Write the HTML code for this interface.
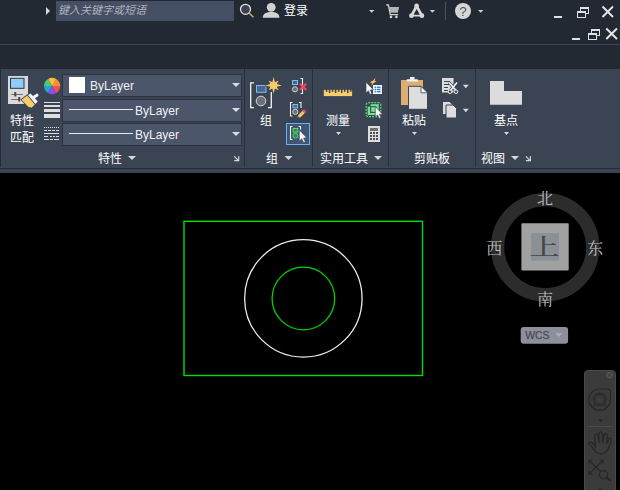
<!DOCTYPE html>
<html lang="zh-CN">
<head>
<meta charset="utf-8">
<title>AutoCAD</title>
<style>
html,body{margin:0;padding:0;}
body{width:620px;height:490px;overflow:hidden;background:#000;position:relative;
 font-family:"Liberation Sans","Noto Sans CJK SC",sans-serif;font-size:12px;color:#fff;}
.abs{position:absolute;}
#title{left:0;top:0;width:620px;height:69px;background:#222933;}
#tline{left:0;top:44px;width:620px;height:1px;background:#3a4556;}
#ribbon{left:0;top:69px;width:620px;height:104px;background:#3b4453;}
#rline{left:0;top:168px;width:620px;height:1px;background:#252b36;}
#ledge{left:0;top:69px;width:1px;height:98px;background:#252b36;}
.sep{position:absolute;top:69px;width:1px;height:98px;background:#272d39;}
.t{position:absolute;white-space:nowrap;line-height:14px;height:14px;}
.c{text-align:center;}
#search{left:56px;top:1px;width:178px;height:20px;background:#454f63;}
#search span{position:absolute;left:2px;top:2px;font-size:11px;line-height:14px;font-style:italic;color:#aeb3bd;white-space:nowrap;}
.dd{position:absolute;left:62px;width:178px;height:21px;background:#4b566a;border:1px solid #2c3340;box-sizing:content-box;}
.dd .tx{position:absolute;top:4px;font-size:12px;line-height:15px;color:#f2f2f2;}
.dd .ln{position:absolute;left:6px;top:9px;width:64px;height:1px;background:#e8e8e8;}
.dd .ar{position:absolute;right:1px;top:8px;width:0;height:0;border-left:4px solid transparent;border-right:4px solid transparent;border-top:4px solid #dcdcdc;}
.compass{position:absolute;font-family:"Liberation Serif","Noto Serif CJK SC",serif;font-size:16px;line-height:16px;width:16px;height:16px;color:#c4c4c4;text-align:center;}
</style>
</head>
<body>
<div class="abs" id="title"></div>
<div class="abs" id="tline"></div>
<div class="abs" id="ribbon"></div>
<div class="abs" id="rline"></div>
<div class="abs" id="ledge"></div>
<div class="sep" style="left:244px"></div>
<div class="sep" style="left:312px"></div>
<div class="sep" style="left:388px"></div>
<div class="sep" style="left:475px"></div>

<div class="abs" id="search"><span>键入关键字或短语</span></div>
<div class="t" style="left:284px;top:4px;">登录</div>

<!-- properties dropdowns -->
<div class="dd" style="top:74px"><div class="abs" style="left:6px;top:2px;width:16px;height:16px;background:#fff;"></div><span class="tx" style="left:27px">ByLayer</span><div class="ar"></div></div>
<div class="dd" style="top:99px"><div class="ln"></div><span class="tx" style="left:72px">ByLayer</span><div class="ar"></div></div>
<div class="dd" style="top:123px"><div class="ln"></div><span class="tx" style="left:72px">ByLayer</span><div class="ar"></div></div>

<!-- big button labels -->
<div class="t c" style="left:4px;width:36px;top:114px;">特性</div>
<div class="t c" style="left:4px;width:36px;top:131px;">匹配</div>
<div class="t c" style="left:254px;width:24px;top:114px;">组</div>
<div class="t c" style="left:320px;width:36px;top:114px;">测量</div>
<div class="t c" style="left:396px;width:36px;top:114px;">粘贴</div>
<div class="t c" style="left:488px;width:36px;top:114px;">基点</div>

<!-- panel titles -->
<div class="t" style="left:98px;top:152px;">特性</div>
<div class="t" style="left:266px;top:152px;">组</div>
<div class="t" style="left:320px;top:152px;">实用工具</div>
<div class="t" style="left:414px;top:152px;">剪贴板</div>
<div class="t" style="left:481px;top:152px;">视图</div>


<svg class="abs" style="left:0;top:0" width="620" height="490" viewBox="0 0 620 490">
<!-- title bar icons -->
<g id="titleicons">
<polygon points="46,7 50,11 46,15" fill="#d8d8d8"/>
<circle cx="245.5" cy="9.3" r="5" fill="#3a4150" stroke="#e0e0e0" stroke-width="1.3"/>
<line x1="249.3" y1="13.2" x2="253.5" y2="17.3" stroke="#d9a066" stroke-width="1.6"/>
<circle cx="271.2" cy="7.3" r="4.4" fill="#d2d2d2"/>
<path d="M262.8 17.7 C262.8 13.5 266.5 12 271.2 12 C275.9 12 279.4 13.5 279.4 17.7 Z" fill="#d2d2d2"/>
<polygon points="369,10 374.4,10 371.7,12.8" fill="#d0d0d0"/>
<!-- cart -->
<g fill="none" stroke="#d2d2d2" stroke-width="1.3">
<path d="M386.3 5 H388.4 L390.3 14.6 H398.2"/>
</g>
<path d="M389.2 6.9 H399.2 L397.8 12.8 H390.4 Z" fill="#b4b4b4"/>
<circle cx="391" cy="16.9" r="1.3" fill="#d2d2d2"/>
<circle cx="396.4" cy="16.9" r="1.3" fill="#d2d2d2"/>
<!-- autodesk A360 -->
<g stroke="#d8d8d8" fill="none" stroke-linecap="round">
<path d="M416.6 6.2 L411.6 15.5 M416.6 6.2 L421.8 15.5" stroke-width="2.7"/>
<path d="M411.6 15.7 H421.8" stroke-width="1.8"/>
</g>
<circle cx="416.6" cy="6" r="2.4" fill="#d8d8d8"/>
<circle cx="411.5" cy="15.7" r="2.4" fill="#d8d8d8"/>
<circle cx="421.9" cy="15.7" r="2.4" fill="#d8d8d8"/>
<polygon points="429.8,10 435,10 432.4,12.8" fill="#d0d0d0"/>
<rect x="445" y="2" width="1" height="18" fill="#46526a"/>
<circle cx="463" cy="11" r="8" fill="#d6d6d6"/>
<text x="463" y="15.6" font-family="Liberation Sans, sans-serif" font-size="13.5" text-anchor="middle" fill="#555">?</text>
<polygon points="478,10 483.4,10 480.7,12.8" fill="#d0d0d0"/>
<!-- window controls row 1 -->
<rect x="554" y="16" width="8" height="2" fill="#e0e0e0"/>
<g fill="none" stroke="#e0e0e0" stroke-width="1">
<rect x="580.5" y="7.5" width="8" height="6"/>
<rect x="577.5" y="11.5" width="8" height="6" fill="#222933"/>
</g>
<rect x="580" y="7" width="9" height="2" fill="#e0e0e0"/>
<rect x="577" y="11" width="9" height="2" fill="#e0e0e0"/>
<path d="M602.5 6.5 L613 17 M613 6.5 L602.5 17" stroke="#e4e4e4" stroke-width="2" fill="none"/>
<!-- row 2 -->
<rect x="572" y="38" width="8" height="2" fill="#e0e0e0"/>
<g fill="none" stroke="#e0e0e0" stroke-width="1">
<rect x="591.5" y="29.5" width="8" height="6"/>
<rect x="588.5" y="33.5" width="8" height="6" fill="#222933"/>
</g>
<rect x="591" y="29" width="9" height="2" fill="#e0e0e0"/>
<rect x="588" y="33" width="9" height="2" fill="#e0e0e0"/>
<path d="M606.3 28.5 L617 39 M617 28.5 L606.3 39" stroke="#e4e4e4" stroke-width="2" fill="none"/>
</g>

<!-- drawing -->
<g id="drawing" fill="none">
<rect x="184" y="221.3" width="238.5" height="154.2" stroke="#00e000" stroke-width="1.4"/>
<circle cx="303.35" cy="298.4" r="58.7" stroke="#ececec" stroke-width="1.3"/>
<circle cx="303.4" cy="298.5" r="31.3" stroke="#00d000" stroke-width="1.3"/>
</g>

<!-- viewcube -->
<g id="viewcube">
<circle cx="545.2" cy="247.2" r="47.6" fill="none" stroke="#2c2c2c" stroke-width="13.3"/>
<rect x="521.4" y="223.3" width="47.3" height="47.1" rx="1" fill="#a1a1a1"/>
<rect x="531" y="233.1" width="28" height="27.5" fill="#8b9096"/>
<text transform="translate(544.3 254.9) scale(1.08 0.82)" x="0" y="-0.3" font-family="Liberation Serif, Noto Serif CJK SC, serif" font-size="28" font-weight="500" text-anchor="middle" fill="#45474c">上</text>
<g font-family="Liberation Serif, Noto Serif CJK SC, serif" font-size="16" text-anchor="middle" fill="#bebebe">
<text x="545" y="203.5">北</text>
<text x="494.3" y="254">西</text>
<text x="595.2" y="253.6">东</text>
<text x="545" y="305">南</text>
</g>
<rect x="520.7" y="327" width="47.4" height="16.8" rx="3" ry="3" fill="#8d8f9b"/>
<text x="525.2" y="338.9" font-family="Liberation Sans, sans-serif" font-size="10.4" fill="#4a4c55" stroke="#4a4c55" stroke-width="0.25">WCS</text>
<polygon points="555.2,333 562.6,333 558.9,337" fill="#a9abb6"/>
</g>

<!-- nav bar -->
<g id="navbar">
<path d="M584.5 491 V374 Q584.5 370.5 588 370.5 H612 Q615.5 370.5 615.5 374 V491" fill="#3b3b3b" stroke="#494949" stroke-width="1"/>
<circle cx="609.6" cy="375.1" r="3.4" fill="#505050"/>
<path d="M608 373.5 L611.2 376.7 M611.2 373.5 L608 376.7" stroke="#383838" stroke-width="1"/>
<!-- steering wheel -->
<g fill="none" stroke="#282828" stroke-width="1.2">
<path d="M599.7 389 H607 Q610.4 389 610.4 392.4 V399.7 A10.7 10.7 0 1 1 599.7 389 Z"/>
<circle cx="599.7" cy="399.4" r="6.3"/>
<circle cx="599.7" cy="399.4" r="4.6" stroke-width="1"/>
<path d="M595.3 403.9 L592.3 407.3 M604.1 403.9 L607.1 407.3"/>
</g>
<polygon points="598,419.2 603,419.2 600.5,422" fill="#242424"/>
<rect x="587" y="426" width="26" height="1" fill="#4a4a4a"/>
<!-- hand -->
<path d="M588.6 443.3 C589.5 441.6 592.2 441.9 593.7 444.2 L595.6 447.3 L594.6 436.2 C594.4 433.6 597.5 433.3 597.9 435.8 L598.9 442.5 L599 433.8 C599 431.2 602.3 431.2 602.4 433.8 L602.7 442.5 L604 435.3 C604.5 432.9 607.5 433.4 607.3 435.9 L606.7 443.5 L608.3 439.5 C609.2 437.3 611.8 438.2 611.1 440.5 C610 444.3 609.3 447.3 607.3 450.3 C605.8 452.7 603.5 453.7 600.5 453.7 C597.3 453.7 595.7 452.5 594.2 450.2 C592.6 447.7 590.5 445.2 588.6 443.3 Z" fill="none" stroke="#282828" stroke-width="1.3" stroke-linejoin="round"/>
<!-- zoom extents -->
<g stroke="#282828" stroke-width="1.3" fill="none">
<path d="M589.5 460.7 L600.7 471.8 M602.5 460.7 L589.5 473.6"/>
<circle cx="603.5" cy="474.6" r="4"/>
<path d="M606.5 477.6 L610.8 480.6" stroke-width="2.4"/>
</g>
<g fill="#282828">
<polygon points="588.3,459.5 592.8,459.5 588.3,464"/>
<polygon points="603.7,459.5 599.2,459.5 603.7,464"/>
<polygon points="588.3,474.8 592.8,474.8 588.3,470.3"/>
</g>
<polygon points="598,488.8 603,488.8 600.5,491.5" fill="#242424"/>
</g>

<!-- match properties icon -->
<g id="matchprop">
<rect x="8" y="76" width="20" height="28" fill="#dadada"/>
<rect x="10.5" y="78.3" width="13.5" height="10" fill="#8ccdfd" stroke="#2c3644" stroke-width="1"/>
<g fill="#707070"><rect x="11.3" y="94" width="11.5" height="1"/><rect x="11.3" y="99" width="9" height="1"/></g>
<g fill="#484848"><rect x="14.3" y="92" width="2" height="4.5"/><rect x="18.2" y="97" width="2" height="4.5"/></g>
<path d="M20.4 99.6 L27 94.5 L30.8 92.5 L33.2 95.2 L35.8 93.5 Q37.8 92.6 38.7 94.3 Q39.3 95.8 38 96.9 L35.6 98.5 L39 102 L35.6 105.2 L32 108.9 L27.6 107.6 Z" fill="#3b4453"/>
<path d="M21.5 99.7 L27.2 95.4 L34.8 104.4 L31.7 107.7 L28.2 106.7 Z" fill="#f8cc6c"/>
<path d="M28 94.9 L30.6 93.6 L37.8 101.6 L35.4 104 Z" fill="#f4f4f4"/>
<path d="M33.2 97.6 L37 95.2" stroke="#f4f4f4" stroke-width="3" stroke-linecap="round" fill="none"/>
</g>
<!-- color wheel -->
<g id="colorwheel">
<path d="M52.1 86 L60.20 86.00 A8.1 8.1 0 0 0 56.15 78.99 Z" fill="#fb8c3a"/>
<path d="M52.1 86 L56.15 78.99 A8.1 8.1 0 0 0 48.05 78.99 Z" fill="#fbc02d"/>
<path d="M52.1 86 L48.05 78.99 A8.1 8.1 0 0 0 44.00 86.00 Z" fill="#4dc878"/>
<path d="M52.1 86 L44.00 86.00 A8.1 8.1 0 0 0 48.05 93.01 Z" fill="#1fa8c8"/>
<path d="M52.1 86 L48.05 93.01 A8.1 8.1 0 0 0 56.15 93.01 Z" fill="#8b4cf0"/>
<path d="M52.1 86 L56.15 93.01 A8.1 8.1 0 0 0 60.20 86.00 Z" fill="#e8564e"/>
</g>
<!-- lineweight icon -->
<g fill="#dedede">
<rect x="44" y="102" width="16" height="1"/>
<rect x="44" y="105" width="16" height="2"/>
<rect x="44" y="109" width="16" height="3"/>
<rect x="44" y="114" width="16" height="4"/>
</g>
<!-- linetype icon -->
<g stroke="#dedede" stroke-width="1" fill="none">
<path d="M44 127.5 H60" stroke-dasharray="1 1"/>
<path d="M44 130.5 H60" stroke-dasharray="3 1"/>
<path d="M44 133.5 H59"/>
<path d="M44 136.5 H59" stroke-dasharray="4 2 2 1 2 1 4 0"/>
<path d="M44 139.5 H59" stroke-dasharray="5 1 3 1 5 0"/>
</g>
<!-- panel title arrows -->
<g fill="#d8d8d8">
<polygon points="128,156 136,156 132,160"/>
<polygon points="284.5,156 292.5,156 288.5,160"/>
<polygon points="374,156 382,156 378,160"/>
<polygon points="511,156 519,156 515,160"/>
<!-- small arrows under big buttons -->
<polygon points="336,132 341,132 338.5,135"/>
<polygon points="412,132 417,132 414.5,135"/>
<polygon points="504,132 509,132 506.5,135"/>
<polygon points="462.8,84.8 468.8,84.8 465.8,88.2"/>
<polygon points="462.8,108.8 468.8,108.8 465.8,112.2"/>
</g>
<!-- dialog launcher arrows -->
<g stroke="#d8d8d8" stroke-width="1.2" fill="none">
<path d="M234.2 156.3 L238.2 160.3 M238.7 156.2 V160.7 H234.2"/>
<path d="M525.9 156.3 L529.9 160.3 M530.4 156.2 V160.7 H525.9"/>
</g>
<!-- group icon -->
<g id="groupicon">
<path d="M254 82.8 H250.7 V107.7 H254 M268 107.7 H271.3 V92" fill="none" stroke="#f4f4f4" stroke-width="1.3"/>
<rect x="256.5" y="85.5" width="9.5" height="6.8" fill="#46668c" stroke="#7cbcf4" stroke-width="1"/>
<circle cx="261" cy="101" r="4.8" fill="#6c7079" stroke="#d4d4d4" stroke-width="1"/>
<polygon points="273.6,77.1 274.9,82.2 278.5,80.5 276.8,84.1 281.9,85.4 276.8,86.7 278.5,90.3 274.9,88.6 273.6,93.7 272.3,88.6 268.7,90.3 270.4,86.7 265.3,85.4 270.4,84.1 268.7,80.5 272.3,82.2" fill="#3b4453" stroke="#3b4453" stroke-width="1.6"/>
<polygon points="273.6,77.1 274.9,82.2 278.5,80.5 276.8,84.1 281.9,85.4 276.8,86.7 278.5,90.3 274.9,88.6 273.6,93.7 272.3,88.6 268.7,90.3 270.4,86.7 265.3,85.4 270.4,84.1 268.7,80.5 272.3,82.2" fill="#f8cc6c"/>
</g>
<!-- ungroup -->
<g id="ungroup">
<path d="M300.5 78.5 H302.5 V93.5 H300.5" fill="none" stroke="#f0f0f0" stroke-width="1.1"/>
<rect x="292.5" y="80.5" width="5" height="4" fill="#46668c" stroke="#7cbcf4" stroke-width="1"/>
<circle cx="295" cy="89.3" r="2.6" fill="#6c7079" stroke="#cfcfcf" stroke-width="1"/>
<path d="M300 83.7 L306.2 89.9 M306.2 83.7 L300 89.9" stroke="#f2465c" stroke-width="2.2"/>
</g>
<!-- group edit -->
<g id="groupedit">
<path d="M292.5 102.5 H290.5 V116 H292.5 M299 102.5 H301 V108" fill="none" stroke="#f0f0f0" stroke-width="1.1"/>
<rect x="293" y="104.5" width="4.6" height="3.4" fill="#46668c" stroke="#7cbcf4" stroke-width="1"/>
<circle cx="295.3" cy="111.8" r="2.6" fill="#6c7079" stroke="#cfcfcf" stroke-width="1"/>
<path d="M297.5 118 L298.3 115 L303.5 109.8 L305.8 112.1 L300.6 117.3 Z" fill="#f3c567"/>
<path d="M302.4 110.9 L304 109.3 L306.3 111.6 L304.7 113.2 Z" fill="#f0485a"/>
<path d="M297.5 118 L298 116.2 L299.3 117.5 Z" fill="#333"/>
</g>
<!-- group selection (active) -->
<g id="groupsel">
<rect x="286.5" y="123.5" width="23" height="21" fill="#3f5674" stroke="#6bb2f2" stroke-width="1"/>
<path d="M292.5 126.5 H290.5 V139.5 H292.5 M298.5 126.5 H300.5 V129.5" fill="none" stroke="#f0f0f0" stroke-width="1.1"/>
<rect x="293.2" y="128.5" width="4.5" height="3.6" fill="#2f8a4a" stroke="#58d878" stroke-width="1"/>
<circle cx="295.4" cy="135.7" r="2.4" fill="#2f8a4a" stroke="#58d878" stroke-width="1"/>
<path d="M299.3 130 V141 L301.8 138.8 L303.6 142.5 L305.3 141.7 L303.5 138.1 L306.6 137.7 Z" fill="#f6f6f6" stroke="#3f5674" stroke-width="0.6"/>
</g>
<!-- ruler -->
<g id="ruler">
<rect x="323.8" y="89.8" width="28.3" height="6.3" fill="#f8cc6c"/>
<g fill="#3b4453"><rect x="325.80" y="89" width="1.5" height="2.8"/><rect x="328.83" y="89" width="1.5" height="4"/><rect x="331.86" y="89" width="1.5" height="2.8"/><rect x="334.89" y="89" width="1.5" height="4"/><rect x="337.92" y="89" width="1.5" height="2.8"/><rect x="340.95" y="89" width="1.5" height="4"/><rect x="343.98" y="89" width="1.5" height="2.8"/><rect x="347.01" y="89" width="1.5" height="4"/><rect x="350.04" y="89" width="1.5" height="2.8"/></g>
</g>
<!-- quick select -->
<g id="qselect">
<rect x="373" y="85" width="9" height="9" fill="#f6f6f6"/>
<g fill="#2f7fe0"><rect x="374.6" y="86.6" width="1.4" height="1.4"/><rect x="376.8" y="86.6" width="3.7" height="1.4"/><rect x="374.6" y="88.8" width="1.4" height="1.4"/><rect x="376.8" y="88.8" width="3.7" height="1.4"/><rect x="374.6" y="91" width="1.4" height="1.4"/><rect x="376.8" y="91" width="3.7" height="1.4"/></g>
<path d="M375.6 77.8 L374.6 80.8 L376.5 81.6 L373.4 82.9 L371.6 86 L371.8 83 L369.6 82 L372.6 81 Z" fill="#f8c860"/>
<path d="M366 82.2 V93 L368.4 90.8 L370.2 94.4 L372 93.6 L370.3 90 L373.5 89.7 Z" fill="#f6f6f6" stroke="#3b4453" stroke-width="0.6"/>
</g>
<!-- select all -->
<g id="selall">
<rect x="366.2" y="102.7" width="14.6" height="14" rx="2" fill="#2f5546" stroke="#5ad87c" stroke-width="1.2" stroke-dasharray="2 1.1"/>
<rect x="370.7" y="104.2" width="8" height="8" fill="#7ddc9c"/>
<path d="M367.7 106.7 H370 V113 H376 V115 H367.7 Z" fill="#7ddc9c"/>
<path d="M370.7 106.7 H376.3 V112.3 H370.7 Z" fill="none" stroke="#2f5546" stroke-width="1"/>
<path d="M375.3 106.5 V117 L377.6 115 L379.3 118.4 L381 117.6 L379.4 114.3 L382.3 114 Z" fill="#f6f6f6" stroke="#2f4a46" stroke-width="0.6"/>
</g>
<!-- calculator -->
<g id="calc">
<rect x="368" y="126" width="12" height="16" fill="#dedede"/>
<rect x="370" y="128" width="8" height="3" fill="#6e6e6e"/>
<g fill="#505050"><rect x="370" y="132" width="2" height="2"/><rect x="373" y="132" width="2" height="2"/><rect x="376" y="132" width="2" height="2"/><rect x="370" y="135" width="2" height="2"/><rect x="373" y="135" width="2" height="2"/><rect x="376" y="135" width="2" height="2"/><rect x="370" y="138" width="2" height="2"/><rect x="373" y="138" width="2" height="2"/><rect x="376" y="138" width="2" height="2"/></g>
</g>
<!-- paste -->
<g id="paste">
<rect x="401" y="80" width="22" height="25" fill="#dcae72"/>
<path d="M406.8 81.5 V79.2 H410 V77 H414.5 V79.2 H417.8 V81.5 Z" fill="#f2f2f2"/>
<path d="M408.5 86.3 H421 L427.5 92.8 V109.3 H408.5 Z" fill="#dedede" stroke="#3b4453" stroke-width="1"/>
<path d="M421 86.3 V92.8 H427.5 Z" fill="#fafafa" stroke="#3b4453" stroke-width="0.8" stroke-linejoin="round"/>
</g>
<!-- cut -->
<g id="cut">
<rect x="442" y="78" width="11.5" height="14.5" fill="#dcdcdc"/>
<g fill="#3b4453"><rect x="444" y="81" width="6" height="1"/><rect x="444" y="84" width="5" height="1"/><rect x="444" y="87" width="4" height="1"/><rect x="444" y="90" width="4" height="1"/></g>
<path d="M449 82.5 L456.5 91 M457 82.5 L450 91" stroke="#3b4453" stroke-width="3" fill="none"/>
<path d="M449 82.5 L456 90.5 M457 82.5 L450.5 90.5" stroke="#f4f4f4" stroke-width="1.6" fill="none"/>
<circle cx="450" cy="91.7" r="1.8" fill="#3b4453" stroke="#f4f4f4" stroke-width="1"/>
<circle cx="456" cy="91.7" r="1.8" fill="#3b4453" stroke="#f4f4f4" stroke-width="1"/>
</g>
<!-- copy -->
<g id="copy">
<path d="M443 102 H449.5 L452.5 105 V114 H443 Z" fill="#dcdcdc"/>
<path d="M446 105 H453 L456.5 108.5 V118 H446 Z" fill="#dcdcdc" stroke="#3b4453" stroke-width="1"/>
<path d="M453 105.5 V108.5 H456 Z" fill="#f8f8f8"/>
</g>
<!-- base point -->
<path d="M490 81 H504 V91 H522 V104.7 H490 Z" fill="#dcdcdc"/>

</svg>
</body>
</html>
